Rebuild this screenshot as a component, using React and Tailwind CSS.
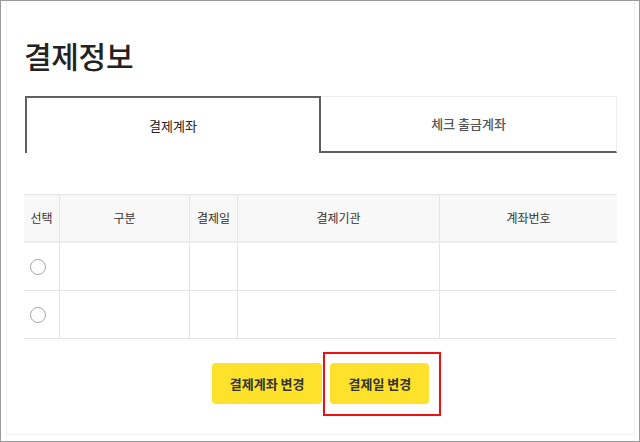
import React from 'react';

const font = { fontFamily: '"Noto Sans CJK KR", "Noto Sans", sans-serif' };

function Radio() {
    return <span className="block w-[16px] h-[16px] rounded-full border border-[#a8a8a8] bg-white"></span>
}

function TableRow() {
    return (
        <div className="grid grid-cols-[36px_130px_48px_202px_177px] h-[48px] border-b border-[#e4e4e4]">
            <div className="flex items-center pl-[6px] border-r border-[#e4e4e4]"><Radio/></div>
            <div className="border-r border-[#e4e4e4]"></div>
            <div className="border-r border-[#e4e4e4]"></div>
            <div className="border-r border-[#e4e4e4]"></div>
            <div></div>
        </div>
    )
}

export default function App() {
    const heads = ["선택", "구분", "결제일", "결제기관", "계좌번호"]

    return (
        <div className="w-[640px] h-[442px] border border-[#9a9a9a] bg-white overflow-hidden" style={font}>
            <div className="ml-[5px] w-[629px] h-[434px] border-r border-b border-l border-[#f0f0f0]">
                <div className="pl-[17px] pt-[38px] w-[611px]">
                    <h1 className="text-[30px] leading-[33px] font-medium text-[#222] tracking-[-0.3px]">결제정보</h1>

                    <div className="mt-[24px] ml-[1px] flex h-[57px] w-[592px]">
                        <div className="w-[296px] flex items-center justify-center border-t-2 border-l-2 border-r-2 border-[#5f5f5f] text-[13px] text-[#222]">
                            결제계좌
                        </div>
                        <div className="flex-1 flex items-center justify-center border-t border-r border-[#ececec] border-b-2 border-b-[#5f5f5f] text-[13px] text-[#555] font-medium">
                            체크 출금계좌
                        </div>
                    </div>

                    <div className="mt-[41px] w-[593px] border-t border-[#e6e6e6]">
                        <div className="grid grid-cols-[36px_130px_48px_202px_177px] h-[48px] bg-[#f8f8f8] border-b-2 border-[#ececec]">
                            {heads.map((h, i) => (
                                <div key={h} className={"flex items-center justify-center text-[12px] text-[#333] " + (i < 4 ? "border-r border-[#e4e4e4]" : "")}>
                                    {h}
                                </div>
                            ))}
                        </div>
                        <TableRow/>
                        <TableRow/>
                    </div>

                    <div className="mt-[24px] flex justify-center gap-[8px] w-[593px]">
                        <button className="h-[41px] px-[18px] rounded-[4px] bg-[#fde12b] text-[13px] font-bold text-[#333]">결제계좌 변경</button>
                        <div className="relative">
                            <button className="h-[41px] px-[18px] rounded-[4px] bg-[#fde12b] text-[13px] font-bold text-[#333]">결제일 변경</button>
                            <div className="absolute -left-[7px] -top-[11px] -right-[12px] -bottom-[12px] border-2 border-[#ee1111]"></div>
                        </div>
                    </div>
                </div>
            </div>
        </div>
    );
}
